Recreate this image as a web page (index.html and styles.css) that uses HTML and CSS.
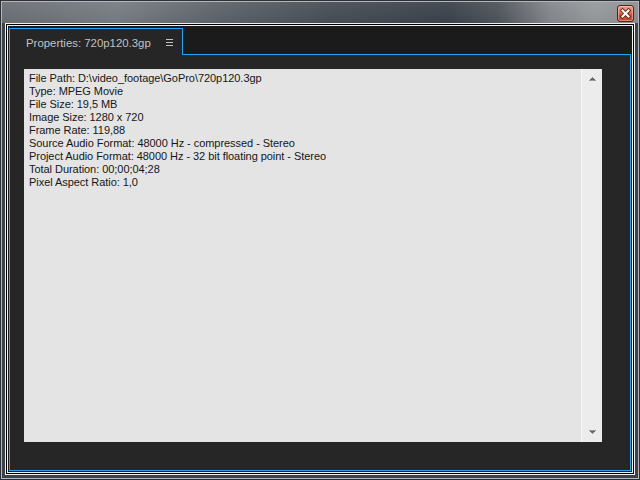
FILE: index.html
```html
<!DOCTYPE html>
<html>
<head>
<meta charset="utf-8">
<link rel="stylesheet" href="styles.css">
</head>
<body>
<div class="window">
  <div class="frame">
    <div class="titlebar">
      <div class="close">
        <svg width="15" height="15" viewBox="0 0 15 15">
          <path d="M4.5 4.5 L10.5 10.5 M10.5 4.5 L4.5 10.5" stroke="#6a2a1c" stroke-width="4" stroke-linecap="square"/>
          <path d="M4.5 4.5 L10.5 10.5 M10.5 4.5 L4.5 10.5" stroke="#ffffff" stroke-width="2" stroke-linecap="square"/>
        </svg>
      </div>
    </div>
    <div class="client">
      <div class="client-b">
        <div class="client-c">
          <div class="panel">
            <div class="tabs">
              <div class="tab">
                <span class="tab-title">Properties: 720p120.3gp</span>
                <svg class="tab-menu" width="7" height="8" viewBox="0 0 7 8">
                  <rect x="0" y="0" width="7" height="1" fill="#c4c4c4"/>
                  <rect x="0" y="3" width="7" height="1" fill="#c4c4c4"/>
                  <rect x="0" y="6" width="7" height="1" fill="#c4c4c4"/>
                </svg>
              </div>
              <div class="tab-fill"></div>
            </div>
            <div class="body">
              <div class="info">
                <div class="lines">
                  <div>File Path: D:\video_footage\GoPro\720p120.3gp</div>
                  <div>Type: MPEG Movie</div>
                  <div>File Size: 19,5 MB</div>
                  <div>Image Size: 1280 x 720</div>
                  <div>Frame Rate: 119,88</div>
                  <div>Source Audio Format: 48000 Hz - compressed - Stereo</div>
                  <div>Project Audio Format: 48000 Hz - 32 bit floating point - Stereo</div>
                  <div>Total Duration: 00;00;04;28</div>
                  <div>Pixel Aspect Ratio: 1,0</div>
                </div>
                <div class="scrollbar">
                  <svg class="arrow" width="7" height="4" viewBox="0 0 7 4">
                    <rect x="3" y="0" width="1" height="1" fill="#888"/>
                    <rect x="2" y="1" width="3" height="1" fill="#777"/>
                    <rect x="1" y="2" width="5" height="1" fill="#666"/>
                    <rect x="0" y="3" width="7" height="1" fill="#9a9a9a"/>
                  </svg>
                  <svg class="arrow" width="7" height="4" viewBox="0 0 7 4">
                    <rect x="0" y="0" width="7" height="1" fill="#9a9a9a"/>
                    <rect x="1" y="1" width="5" height="1" fill="#666"/>
                    <rect x="2" y="2" width="3" height="1" fill="#777"/>
                    <rect x="3" y="3" width="1" height="1" fill="#888"/>
                  </svg>
                </div>
              </div>
            </div>
          </div>
        </div>
      </div>
    </div>
  </div>
</div>
</body>
</html>
```

FILE: styles.css
```css
* { box-sizing: border-box; }
html, body { margin: 0; padding: 0; background: #000; }

.window {
  width: 640px;
  height: 480px;
  border: 1px solid #2c3035;
}

.frame {
  width: 100%;
  height: 100%;
  border: 1px solid #b4b8bc;
  background: #3a424b;
  display: flex;
  flex-direction: column;
  padding: 0 3px 3px 3px;
}

.titlebar {
  height: 21px;
  margin: 0 -3px;
  padding: 3px 4px 0 0;
  display: flex;
  justify-content: flex-end;
  align-items: flex-start;
  background:
    linear-gradient(to bottom, rgba(255,255,255,0.05), rgba(0,0,0,0.04)),
    linear-gradient(to right, #6b7076 0%, #797e84 18%, #5e646b 34%, #484e56 52%, #3c434c 70%, #50555c 78%, #84888d 86%, #989b9e 93%, #8d9095 100%);
}

.close {
  width: 17px;
  height: 17px;
  border: 1px solid #4a2a22;
  border-radius: 3px;
  background: linear-gradient(to bottom, #eca08c 0%, #e27a60 40%, #cc5438 60%, #c24c32 100%);
  box-shadow: inset 0 0 0 1px rgba(255,210,190,0.45);
  display: flex;
  align-items: center;
  justify-content: center;
}

.client {
  flex: 1;
  border: 1px solid #f0f0f0;
  display: flex;
}
.client-b {
  flex: 1;
  border: 1px solid #000;
  display: flex;
}
.client-c {
  flex: 1;
  border: 1px solid #f0f0f0;
  background: #1b1b1b;
  padding: 2px 1px 1px 1px;
  display: flex;
}

.panel {
  flex: 1;
  display: flex;
  flex-direction: column;
}

.tabs {
  height: 27px;
  display: flex;
}
.tab {
  width: 174px;
  border: 1px solid #27a2f0;
  border-bottom: none;
  background: #262626;
  display: flex;
  align-items: center;
  padding: 0 0 0 16px;
}
.tab-title {
  font-family: "Liberation Sans", Arial, sans-serif;
  font-size: 11.4px;
  color: #c2c2c2;
  margin-top: 2px;
}
.tab-menu {
  margin-left: 15px;
  margin-top: 2px;
}
.tab-fill {
  flex: 1;
  border-bottom: 1px solid #27a2f0;
}

.body {
  flex: 1;
  border: 1px solid #27a2f0;
  border-top: none;
  background: #262626;
  padding: 14px 28px 28px 14px;
  display: flex;
}

.info {
  flex: 1;
  background: #e4e4e4;
  display: flex;
}

.lines {
  flex: 1;
  padding: 3px 0 0 5px;
  font-family: "Liberation Sans", Arial, sans-serif;
  font-size: 11px;
  letter-spacing: -0.05px;
  line-height: 13px;
  color: #161616;
}

.scrollbar {
  width: 21px;
  border-left: 1px solid #f8f8f8;
  background: #ececec;
  display: flex;
  flex-direction: column;
  justify-content: space-between;
  align-items: center;
  padding: 8px 0 8px 0;
}
.arrow { display: block; }
```
